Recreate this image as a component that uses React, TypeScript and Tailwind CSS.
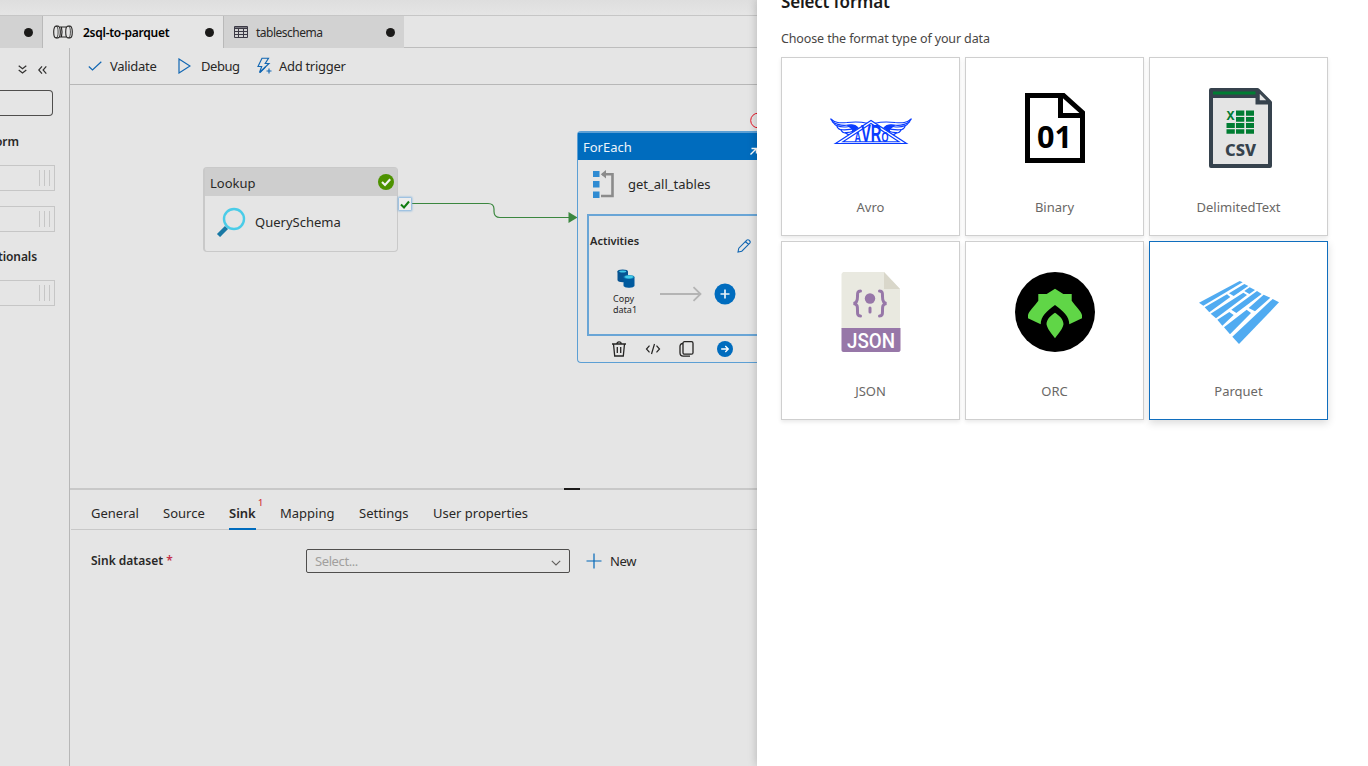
import React from "react";

function Dot() {
  return <span className="h-[9px] w-[9px] rounded-full bg-[#1b1a19]" />;
}

function PipelineIcon() {
  return (
    <svg width="20" height="14" viewBox="0 0 20 14" fill="none" stroke="#252423" strokeWidth="1.1">
      <path d="M3 1.100C1.500 1.100.7 3.900.7 7s.8 5.900 2.300 5.900h2c1.500 0 2.300-2.800 2.300-5.900S6.500 1.100 5 1.100Z" />
      <path d="M3.200 1.100c1.300 0 1.900 2.800 1.900 5.900s-.6 5.900-1.900 5.900" strokeWidth=".8" />
      <path d="M7 2h6M7 12h6M8.400 2c.7 2.800.7 7.200 0 10" />
      <path d="M15 1.100c-1.500 0-2.300 2.800-2.300 5.900s.8 5.900 2.300 5.900h2c1.500 0 2.300-2.800 2.300-5.900S18.500 1.100 17 1.100Z" />
      <path d="M16 1.100c1 1.200 1.400 3.400 1.400 5.900s-.4 4.700-1.400 5.900" strokeWidth=".8" />
    </svg>
  );
}

function TableIcon() {
  return (
    <svg width="14" height="12" viewBox="0 0 14 12" fill="none" stroke="#3b3945" strokeWidth="1">
      <path d="M.5.5h13v11H.5Z" />
      <path d="M.5 2.200h13" strokeWidth="1.600" />
      <path d="M.5 5.500h13M.5 8.500h13M4.500 3v8.500M9.500 3v8.500" />
    </svg>
  );
}

function TabStrip() {
  return (
    <div className="flex h-8 shrink-0 text-[12px]">
      <div className="flex w-[43px] items-center border-r border-[#b9b9b9] bg-[#d2d2d2] pl-[24px]">
        <Dot />
      </div>
      <div className="flex w-[181px] items-center border-r border-[#b9b9b9] pl-[10px]">
        <PipelineIcon />
        <span className="ml-[10px] w-[122px] whitespace-nowrap pt-[2px] font-semibold tracking-[-0.26px] text-black">2sql-to-parquet</span>
        <Dot />
      </div>
      <div className="flex w-[180px] items-center bg-[#d2d2d2] pl-[10px]">
        <TableIcon />
        <span className="ml-2 w-[130px] pt-[2px] tracking-[-0.5px]">tableschema</span>
        <Dot />
      </div>
      <div className="flex-1 border-b border-[#bdbdbd]" />
    </div>
  );
}

function DragBox() {
  return (
    <div className="flex h-[26px] w-[55px] items-center justify-end gap-1 border border-l-0 border-[#c6c6c6] pr-1">
      <span className="h-4 w-px bg-[#c6c6c6]" />
      <span className="h-4 w-px bg-[#c6c6c6]" />
      <span className="h-4 w-px bg-[#c6c6c6]" />
    </div>
  );
}

function Sidebar() {
  return (
    <div className="w-[70px] shrink-0 overflow-hidden border-r border-[#b7b7b7] text-[12px] font-semibold leading-4">
      <div className="flex h-[42px] items-center gap-[11px] pl-[18px] pt-px">
        <svg width="9" height="9" viewBox="0 0 9 9" fill="none" stroke="#323130" strokeWidth="1.200">
          <path d="m.7.7 3.800 3L8.300.7M.7 5l3.800 3L8.300 5" />
        </svg>
        <svg width="9" height="8" viewBox="0 0 9 8" fill="none" stroke="#323130" strokeWidth="1.200">
          <path d="M4 .4.8 4 4 7.600M8.300.4 5.100 4l3.200 3.600" />
        </svg>
      </div>
      <div className="h-[26px] w-[53px] rounded-r-sm border border-l-0 border-[#4f4e4d]" />
      <div className="ml-[-5px] mt-[18px] h-[31px] tracking-[-0.1px]">orm</div>
      <DragBox />
      <div className="h-[15px]" />
      <DragBox />
      <div className="ml-[-2px] mt-[17px] h-[31px] tracking-[-0.1px]">tionals</div>
      <DragBox />
    </div>
  );
}

function Toolbar() {
  return (
    <div className="flex h-[37px] shrink-0 items-center border-b border-[#b7b7b7] pl-[18px] text-[13px]">
      <svg width="14" height="10" viewBox="0 0 14 10" fill="none" stroke="#1267b3" strokeWidth="1.200">
        <path d="m.8 5.500 3.700 3.500L13.300.7" />
      </svg>
      <span className="ml-2 w-[68px] pt-0.5 tracking-[-0.3px]">Validate</span>
      <svg width="13" height="16" viewBox="0 0 13 16" fill="none" stroke="#1267b3" strokeWidth="1.200">
        <path d="M1 1v14l11-7Z" />
      </svg>
      <span className="ml-[10px] w-[56px] pt-0.5 tracking-[-0.45px]">Debug</span>
      <svg width="16" height="18" viewBox="0 0 16 18" fill="none" stroke="#1267b3" strokeWidth="1.150">
        <path d="M5 1.200h6.500L8.200 6.500H12L2.500 15.500l2.200-6H1Z" />
        <path d="M3 15.500 8.500 10M12 11.500v5M9.500 14h5" />
      </svg>
      <span className="ml-[6px] pt-0.5 tracking-[-0.3px]">Add trigger</span>
    </div>
  );
}

function LookupNode() {
  return (
    <div className="absolute left-[133px] top-[82px] h-[85px] w-[195px] rounded border border-l-2 border-[#c9c9c9] text-[13px]">
      <div className="flex h-7 items-center justify-between bg-[#cecece] pl-[5px] pr-[3px]">
        <span className="pt-[3px]">Lookup</span>
        <svg width="16" height="16" viewBox="0 0 16 16">
          <circle cx="8" cy="8" r="8" fill="#4d9200" />
          <path d="m4 8 3 3 5.200-5.800" fill="none" stroke="#f3f3f3" strokeWidth="2.100" />
        </svg>
      </div>
      <div className="flex items-center pl-[11px] pt-[11px]">
        <svg width="30" height="30" viewBox="0 0 30 30" fill="none">
          <path d="M10.500 20.500 2.500 28.500" stroke="#1878a4" strokeWidth="4.400" />
          <circle cx="18" cy="12" r="10" stroke="#4acce8" strokeWidth="2.400" />
        </svg>
        <span className="ml-[9px] pt-0.5">QuerySchema</span>
      </div>
    </div>
  );
}

function ForEachNode() {
  return (
    <div className="absolute left-[507px] top-[46px] h-[232px] w-[194px] rounded-sm border border-r-0 border-t-2 border-[#5c9fd4] text-[13px]">
      <div className="flex h-[27px] items-center bg-[#006cbe] pl-[5px] text-[#edf4fa]">
        <span className="pt-[3px]">ForEach</span>
        <svg className="ml-[117px] mt-2" width="10" height="10" viewBox="0 0 10 10" fill="none" stroke="#fff" strokeWidth="1.400">
          <path d="M1.500 8.500 7.500 2.500M2.500 2.500h5v5" />
        </svg>
      </div>
      <div className="flex h-[54px] items-start pl-[14px] pt-[10px]">
        <svg className="ml-px" width="22" height="28" viewBox="0 0 22 28">
          <g fill="#2f8bd2">
            <path d="M0 1h6.500v6H0ZM0 11h6.500v6.500H0ZM0 21.500h6.500V28H0Z" />
          </g>
          <path d="M9 4.200h10.500V26H8" fill="none" stroke="#8b8b8b" strokeWidth="2.600" />
          <path d="M7.800 4.200 13 0v8.400Z" fill="#8b8b8b" />
        </svg>
        <span className="ml-[13px] pt-[4px] leading-5">get_all_tables</span>
      </div>
      <div className="ml-[9px] h-[122px] border-2 border-r-0 border-[#69a5d6] pl-[1px]">
        <div className="flex h-[49px] pt-[17px]">
          <span className="w-[147px] text-[11px] font-semibold leading-4">Activities</span>
          <svg className="mt-1.5" width="14" height="14" viewBox="0 0 14 14" fill="none" stroke="#1267b3" strokeWidth="1.100">
            <path d="m1 13 .8-3.800 8-8c.6-.6 1.600-.6 2.200 0l.8.8c.6.6.6 1.600 0 2.200l-8 8ZM8.500 2.500l3 3" />
          </svg>
        </div>
        <div className="flex items-start pt-px">
          <div className="w-[70px] pl-[23px] text-[9px] leading-[11px]">
            <svg className="ml-[4px]" width="18" height="23" viewBox="0 0 18 23">
              <path d="M.5 5.500v8.500c0 3 10.500 3 10.500 0V5.500Z" fill="#075492" />
              <ellipse cx="5.700" cy="5.500" rx="5.300" ry="2" fill="#075492" />
              <ellipse cx="5.700" cy="5.500" rx="3.500" ry="1.100" fill="#40c7e8" />
              <path d="M6.500 11v8.500c0 3 11 3 11 0V11Z" fill="#005a9e" />
              <ellipse cx="12" cy="11" rx="5.500" ry="2.100" fill="#1688bc" />
              <ellipse cx="12" cy="11" rx="4" ry="1.400" fill="#43cbe9" />
            </svg>
            <div className="mt-[4px]">Copy<br />data1</div>
          </div>
          <svg className="mt-[20px]" width="42" height="16" viewBox="0 0 42 16" fill="none" stroke="#b4b4b4" strokeWidth="1.800">
            <path d="M0 8h40M33.500 1.200l7 6.800-7 6.800" />
          </svg>
          <svg className="ml-[12px] mt-[17px]" width="22" height="22" viewBox="0 0 22 22">
            <circle cx="11" cy="11" r="10.500" fill="#006cbe" />
            <path d="M6.500 11h9M11 6.500v9" stroke="#e8f1f8" strokeWidth="1.700" />
          </svg>
        </div>
      </div>
      <div className="flex h-[23px] items-center pl-[34px] pt-[3px]">
        <svg width="14" height="16" viewBox="0 0 14 16" fill="none" stroke="#252423" strokeWidth="1.300">
          <path d="M0 3h14M4.800 3c0-2.800 4.400-2.800 4.400 0M1.500 3l1.200 12h8.600l1.200-12M5.300 6v6M8.700 6v6" />
        </svg>
        <svg className="ml-[19px]" width="16" height="12" viewBox="0 0 16 12" fill="none" stroke="#252423" strokeWidth="1.200">
          <path d="M4.500 2.700 1.500 6l3 3.300M11.500 2.700l3 3.300-3 3.300M9.500 1 6.500 11" />
        </svg>
        <svg className="ml-[18px]" width="15" height="16" viewBox="0 0 15 16" fill="none" stroke="#252423" strokeWidth="1.300">
          <rect x="4" y=".7" width="10" height="12.500" rx="1.500" />
          <path d="M4 2.500c-2 0-3 1-3 3v6.300c0 2.200 1 3.400 3.200 3.400H11" />
        </svg>
        <svg className="ml-[23px]" width="16" height="16" viewBox="0 0 16 16">
          <circle cx="8" cy="8" r="8" fill="#006cbe" />
          <path d="M4.200 8h7M8.300 5l3 3-3 3" fill="none" stroke="#fff" strokeWidth="1.300" />
        </svg>
      </div>
    </div>
  );
}

function Canvas() {
  return (
    <div className="relative h-[403px] shrink-0 overflow-hidden">
      <svg className="absolute left-0 top-0" width="687" height="403" viewBox="0 0 687 403" fill="none">
        <path d="M342 118.500h76c4 0 6 2 6 5.500v2.500c0 4 2 6 6 6h70" stroke="#3b873f" strokeWidth="1.200" />
        <path d="M498.500 127v11l9-5.500Z" fill="#3b873f" />
        <circle cx="688" cy="35.500" r="7.300" stroke="#e81123" />
      </svg>
      <LookupNode />
      <div className="absolute left-[329px] top-[113px] flex h-3 w-3 items-center justify-center bg-[#ededed] shadow-[0_0_2px_1px_#7fb2df]">
        <svg width="10" height="9" viewBox="0 0 10 9" fill="none" stroke="#107c10" strokeWidth="2">
          <path d="m1 4.500 3 3 5-6" />
        </svg>
      </div>
      <ForEachNode />
    </div>
  );
}

function Properties() {
  return (
    <div className="text-[13px]">
      <div className="flex h-[2px] bg-[#c8c8c8]">
        <div className="ml-[494px] w-4 bg-[#1b1a19]" />
      </div>
      <div className="ml-px flex h-[40px] border-b border-[#c8c8c8] pl-5">
        <span className="w-[72px] pt-[13px] leading-5">General</span>
        <span className="w-[66px] pt-[13px] leading-5">Source</span>
        <span className="relative mb-[-1px] h-[40px] w-[27px] border-b-2 border-[#006cbe] pt-[13px] font-semibold leading-5">
          Sink
          <span className="absolute left-[29px] top-[7px] text-[9px] font-medium leading-3 text-[#d13438]">1</span>
        </span>
        <span className="ml-6 w-[79px] pt-[13px] leading-5">Mapping</span>
        <span className="w-[74px] pt-[13px] leading-5">Settings</span>
        <span className="pt-[13px] leading-5">User properties</span>
      </div>
      <div className="flex items-center pl-[21px] pt-[19px]">
        <span className="w-[215px] text-[12px] font-semibold">
          Sink dataset <span className="text-[#c4314b]">*</span>
        </span>
        <div className="flex h-6 w-[264px] items-center justify-between rounded-[2px] border border-[#4f4e4d] pl-2 pr-2 text-[#a19f9d]">
          <span className="pt-0.5 tracking-[-0.4px]">Select...</span>
          <svg className="mt-1" width="10" height="6" viewBox="0 0 10 6" fill="none" stroke="#605e5c" strokeWidth="1.100">
            <path d="m.8.8 4.200 4.200L9.200.8" />
          </svg>
        </div>
        <svg className="ml-4" width="16" height="16" viewBox="0 0 16 16" stroke="#0067b8" strokeWidth="1.200">
          <path d="M.5 8h15M8 .5v15" />
        </svg>
        <span className="ml-2 pt-0.5 tracking-[-0.4px]">New</span>
      </div>
    </div>
  );
}

function AvroWing() {
  return (
    <>
      <path d="M.5.700C5 5.200 10 5 17 4.500c8-.9 14-.8 20 .8M.5.700c2.500 3 3 5.500 6.500 7.300 0 2.500 3 3.500 4 4 1 2.500 3.500 3 5 3.200 2 1.800 4 1.800 5.500 1.500" />
      <path d="M2 3.500c6 4 10 4.500 16 3.500 5-.8 8 .3 9.500 2.500M6.500 7.500c6 2.500 9 1.500 13 1M10.500 11.500c5 1 8 0 12-.5M15 14.500c3 .5 6-.5 9-1.500" />
      <path d="M18 7.500c4-.7 8 .2 10 2.500l-6 4c2-2.500-1-4-4-6.500Z" fill="#0a3cff" />
    </>
  );
}

function AvroLogo() {
  return (
    <svg className="mt-[7px]" width="82" height="28" viewBox="0 0 82 28" fill="none" stroke="#0a3cff" strokeWidth="1.150">
      <AvroWing />
      <g transform="matrix(-1 0 0 1 82 0)">
        <AvroWing />
      </g>
      <path d="M5.500 25.500 41 2.500l35.500 23Z" fill="#fff" strokeWidth="1.200" />
      <path d="M13 23.700 41 5.500l28 18.200Z" strokeWidth="1.100" />
      <text
        x="24.500"
        y="23.500"
        fill="#0a3cff"
        stroke="none"
        fontFamily="Liberation Sans"
        fontWeight="bold"
        textLength="34"
        lengthAdjust="spacingAndGlyphs"
      >
        <tspan fontSize="14">A</tspan>
        <tspan fontSize="23">VR</tspan>
        <tspan fontSize="14">O</tspan>
      </text>
    </svg>
  );
}

function BinaryLogo() {
  return (
    <svg width="60" height="70" viewBox="0 0 60 70">
      <path d="M2.500 2.500h36l19 17v48h-55Z" fill="#fff" stroke="#000" strokeWidth="5" />
      <path d="M35.500 2v20.500H58" fill="none" stroke="#000" strokeWidth="5" />
      <text x="12" y="54.500" fontFamily="Noto Sans" fontWeight="bold" fontSize="30" textLength="35" lengthAdjust="spacingAndGlyphs">01</text>
    </svg>
  );
}

function CsvLogo() {
  return (
    <svg className="ml-1" width="63" height="80" viewBox="0 0 63 80">
      <path d="M2 2h46.500L61 14.500V78H2Z" fill="#e4e4e4" stroke="#36424d" strokeWidth="4" strokeLinejoin="round" />
      <path d="M2 6.500h46" stroke="#36424d" strokeWidth="7" />
      <path d="M4 5h43" stroke="#007c32" strokeWidth="3" />
      <path d="M48.500 2v12.500H61" fill="#e4e4e4" stroke="#36424d" strokeWidth="4" />
      <path d="M50 4v9h9Z" fill="#e4e4e4" stroke="#36424d" strokeWidth="1.500" />
      <path fill="#007c32" d="M27 22.500h8.300v5.200H27ZM37 22.500h8v5.200h-8ZM27 29h8.300v4.800H27ZM37 29h8v4.800h-8ZM17.500 35h8.300v5h-8.300ZM27 35h8.300v5H27ZM37 35h8v5h-8ZM17.500 41.200h8.300v4.600h-8.300ZM27 41.200h8.300v4.600H27ZM37 41.200h8v4.600h-8Z" />
      <text x="17.500" y="32" fontFamily="Noto Sans" fontWeight="bold" fontSize="12" fill="#007c32" textLength="8" lengthAdjust="spacingAndGlyphs">X</text>
      <text x="16" y="68.200" fontFamily="Noto Sans" fontWeight="800" fontSize="16" fill="#36424d" textLength="31" lengthAdjust="spacingAndGlyphs">CSV</text>
    </svg>
  );
}

function JsonLogo() {
  return (
    <svg width="60" height="80" viewBox="0 0 60 80">
      <path d="M2 0h41l16 17v40H.5V2Z" fill="#e9e9e0" />
      <path d="M43 0v17h16Z" fill="#d9d7ca" />
      <path d="M.5 56h59v22c0 1.200-.8 2-2 2h-55c-1.200 0-2-.8-2-2Z" fill="#9777a8" />
      <g fill="none" stroke="#9777a8" strokeWidth="3" strokeLinecap="round">
        <path d="M19.500 19c-3 0-3 2-3 5s.3 7-4 7.500c4.300.5 4 3.500 4 7.500 0 3 0 5 3 5M38.500 19c3 0 3 2 3 5s-.3 7 4 7.500c-4.300.5-4 3.500-4 7.500 0 3 0 5-3 5M29 36v4" />
      </g>
      <circle cx="29" cy="26.500" r="5.200" fill="#9777a8" />
      <text x="6" y="75.500" fontFamily="Roboto" fontWeight="500" fontSize="20" fill="#fff" textLength="48" lengthAdjust="spacingAndGlyphs">JSON</text>
    </svg>
  );
}

function OrcLogo() {
  return (
    <svg width="80" height="80" viewBox="0 0 80 80">
      <circle cx="40" cy="40" r="40" fill="#000" />
      <path
        d="M40 16.700 48.300 22h8.400v6.700c3 4.300 10.300 11.300 10.300 14.500v3.100l-12.700 6c0-8-6-13-14.300-19.300-8.300 6.300-14.300 11.300-14.300 19.300l-12.700-6v-3.100c0-3.200 7.300-10.200 10.300-14.500V22h8.400Z"
        fill="#60d647"
      />
      <path d="M40 40.700c4 2.500 8.500 6.500 8.500 11.500-1 5-4.500 8.500-8.500 14.100-4-5.600-7.500-9.100-8.500-14.100 0-5 4.500-9 8.500-11.500Z" fill="#60d647" />
    </svg>
  );
}

function ParquetLogo() {
  return (
    <svg className="mt-px" width="80" height="63" viewBox="27 21 240 189" fill="#50abf1">
      <path d="M27 86 149 21l9 4L40 95Z" />
      <path d="m44 100 67-39 10 8-63 46ZM117 58l46-28 12 6-44 30Z" />
      <path d="m62 119 98-63 11 7-93 70ZM163 51l16-11 16 8-17 12Z" />
      <path d="m82 137 36-23 13 9-34 32ZM124 107l77-56 14 9-76 57Z" />
      <path d="m102 160 68-53 13 10-63 64ZM176 102l45-40 20 9-46 41Z" />
      <path d="M127 188 248 75l19 10-120 125Z" />
    </svg>
  );
}

const formats: { name: string; logo: React.ReactNode }[] = [
  { name: "Avro", logo: <AvroLogo /> },
  { name: "Binary", logo: <BinaryLogo /> },
  { name: "DelimitedText", logo: <CsvLogo /> },
  { name: "JSON", logo: <JsonLogo /> },
  { name: "ORC", logo: <OrcLogo /> },
  { name: "Parquet", logo: <ParquetLogo /> },
];

function FormatPanel() {
  return (
    <aside className="z-10 h-full w-[611px] shrink-0 bg-white pl-6 shadow-[0_0_9px_rgba(0,0,0,0.22)]">
      <h2 className="mt-[-10px] h-[39px] text-[17px] font-semibold leading-6 tracking-[-0.2px] text-[#1b1a19]">Select format</h2>
      <p className="h-[28px] text-[12.500px] leading-5 tracking-[-0.13px] text-[#484644]">Choose the format type of your data</p>
      <div className="grid w-[547px] grid-cols-3 gap-[5px]">
        {formats.map(({ name, logo }) => (
          <button
            key={name}
            className={
              name === "Parquet"
                ? "flex h-[179px] flex-col items-center border border-[#106ebe] bg-white shadow-[0_3px_8px_rgba(0,0,0,0.15)]"
                : "flex h-[179px] flex-col items-center border border-[#cfcfcf] bg-white shadow-[0_2px_4px_rgba(0,0,0,0.09)]"
            }
          >
            <span className="mt-[30px] flex h-20 items-center">{logo}</span>
            <span className="mt-[29px] text-[13px] leading-5 text-[#6a6866]">{name}</span>
          </button>
        ))}
      </div>
    </aside>
  );
}

export default function App() {
  return (
    <div className="flex h-[766px] w-[1368px] overflow-hidden bg-[#e5e5e5] font-['Noto_Sans',sans-serif] text-[#292827]">
      <div className="flex w-[757px] shrink-0 flex-col">
        <div className="h-4 shrink-0 border-b border-[#c6c6c6] bg-linear-to-b from-[#dedede] to-[#e5e5e5]" />
        <TabStrip />
        <div className="flex min-h-0 flex-1">
          <Sidebar />
          <main className="flex min-w-0 flex-1 flex-col">
            <Toolbar />
            <Canvas />
            <Properties />
          </main>
        </div>
      </div>
      <FormatPanel />
    </div>
  );
}
